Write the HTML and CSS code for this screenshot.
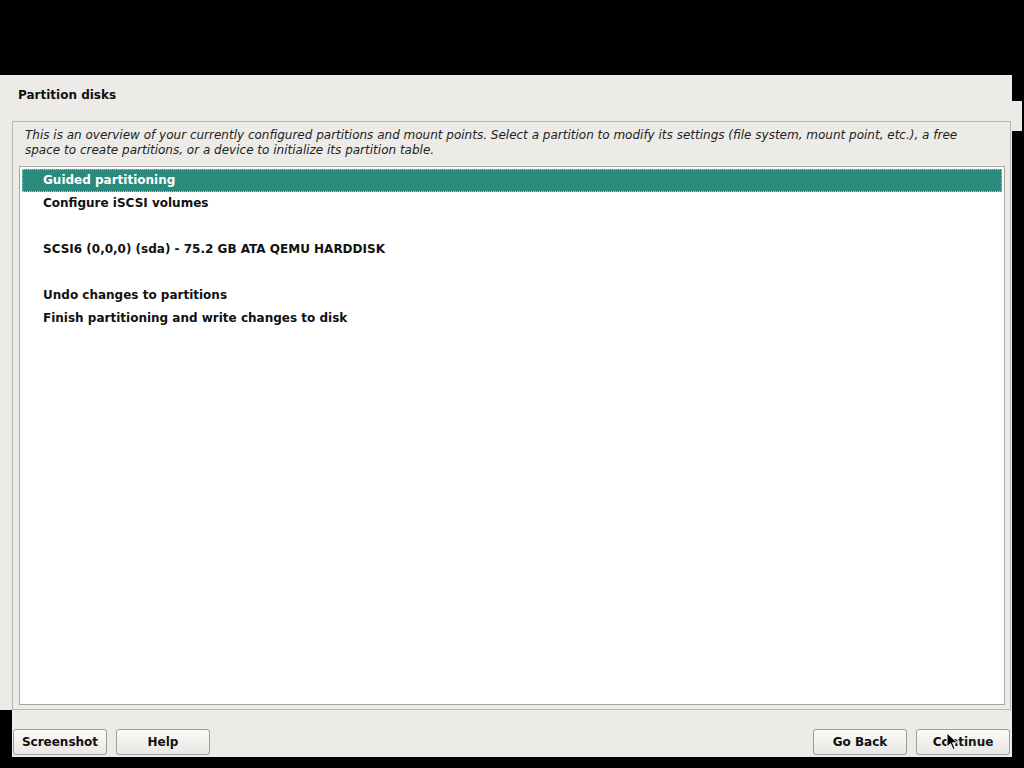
FILE: index.html
```html
<!DOCTYPE html>
<html lang="en">
<head>
    <meta charset="UTF-8">
    <title>Partition disks</title>
    <link rel="stylesheet" href="styles.css">
</head>
<body>

<div class="window">
    <div class="main">
        <h1 class="title">Partition disks</h1>

        <div class="frame">
            <p class="help-text">This is an overview of your currently configured partitions and mount points. Select a partition to modify its settings (file system, mount point, etc.), a free space to create partitions, or a device to initialize its partition table.</p>

            <ul class="list">
                <li class="item selected">Guided partitioning</li>
                <li class="item">Configure iSCSI volumes</li>
                <li class="item blank"></li>
                <li class="item">SCSI6 (0,0,0) (sda) - 75.2 GB ATA QEMU HARDDISK</li>
                <li class="item blank"></li>
                <li class="item">Undo changes to partitions</li>
                <li class="item">Finish partitioning and write changes to disk</li>
            </ul>
        </div>
    </div>

    <div class="footer">
        <div class="left-buttons">
            <button class="btn">Screenshot</button>
            <button class="btn">Help</button>
        </div>
        <div class="right-buttons">
            <button class="btn">Go Back</button>
            <button class="btn">Continue</button>
        </div>
    </div>

    <!-- leftover strip from the redraw -->
    <div class="patch"></div>

    <!-- mouse pointer over Continue -->
    <svg class="cursor" width="13" height="20" viewBox="0 0 13 20">
        <path d="M1 1 L1 15 L4.5 11.5 L7 17.5 L9 16.6 L6.6 10.8 L11.5 10.8 Z" fill="#000" stroke="#fff" stroke-width="1"/>
    </svg>
</div>

</body>
</html>
```

FILE: styles.css
```css
body {
    margin: 0;
    background-color: #000;
    font-family: 'DejaVu Sans', sans-serif;
    height: 768px;
    overflow: hidden;
}

.window {
    position: relative;
    width: 1012px;
    margin-top: 75px;
}

.main {
    background-color: #edebe7;
    height: 635px;
    padding: 0 1px 0 12px;
    box-sizing: border-box;
    display: flex;
    flex-direction: column;
}

.title {
    font-size: 12px;
    font-weight: bold;
    margin: 0;
    padding: 13px 0 0 6px;
    height: 46px;
    box-sizing: border-box;
    color: #111;
}

.frame {
    flex: 1;
    border: 1px solid #b8b6b2;
    padding: 6px 5px 4px 6px;
    display: flex;
    flex-direction: column;
}

.help-text {
    font-size: 12px;
    font-style: italic;
    line-height: 15px;
    margin: 0 30px 8px 6px;
    color: #222;
}

.list {
    flex: 1;
    list-style: none;
    margin: 0;
    padding: 2px;
    background-color: #fff;
    border: 1px solid #a9a7a3;
}

.item {
    height: 23px;
    line-height: 21px;
    padding-left: 20px;
    font-size: 12px;
    font-weight: bold;
    color: #111;
    box-sizing: border-box;
    border: 1px solid transparent;
}

.selected {
    background-color: #2a8a7b;
    color: #fff;
    border: 1px dotted #9fd3c8;
}

.footer {
    background-color: #edebe7;
    margin-left: 12px;
    height: 47px;
    display: flex;
    justify-content: space-between;
    align-items: flex-end;
    padding: 0 2px 2px 1px;
    box-sizing: border-box;
}

.left-buttons,
.right-buttons {
    display: flex;
    gap: 9px;
}

.btn {
    width: 94px;
    height: 26px;
    font-family: 'DejaVu Sans', sans-serif;
    font-size: 12px;
    font-weight: bold;
    color: #111;
    background: linear-gradient(#fbfaf9, #e9e7e3);
    border: 1px solid #a09e9a;
    border-radius: 3px;
    padding: 0;
}

.patch {
    position: absolute;
    top: 26px;
    left: 1012px;
    width: 10px;
    height: 30px;
    background-color: #edebe7;
}

.cursor {
    position: absolute;
    left: 946px;
    top: 657px;
}
```
